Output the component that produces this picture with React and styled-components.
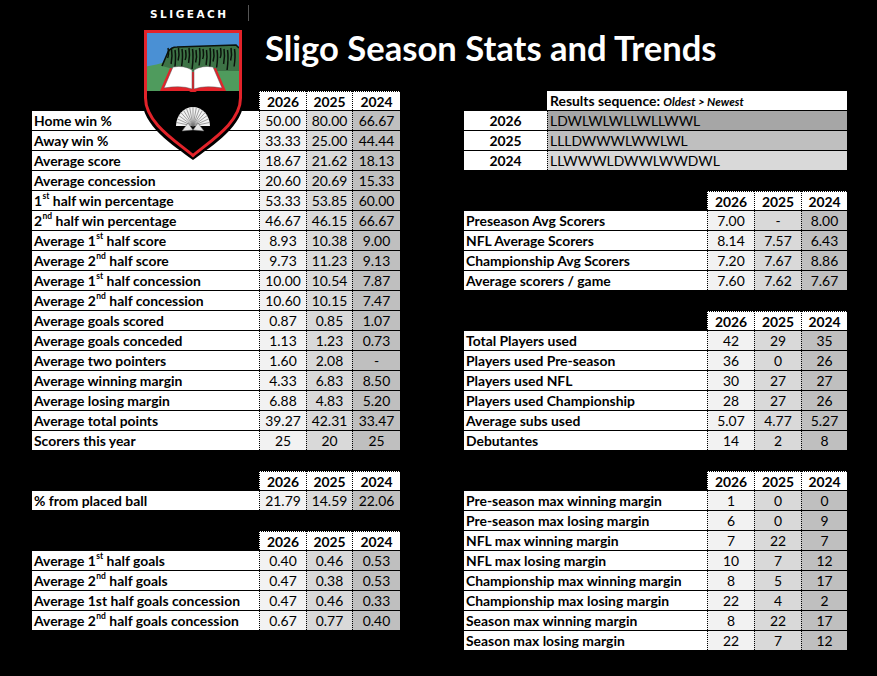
import styled, { createGlobalStyle } from 'styled-components';

const YEARS = ['2026', '2025', '2024'];
const SHADES = ['#f2f2f2', '#d9d9d9', '#bfbfbf'];

const mainStats = [
  ['Home win %', '50.00', '80.00', '66.67'],
  ['Away win %', '33.33', '25.00', '44.44'],
  ['Average score', '18.67', '21.62', '18.13'],
  ['Average concession', '20.60', '20.69', '15.33'],
  [<>1<sup>st</sup> half win percentage</>, '53.33', '53.85', '60.00'],
  [<>2<sup>nd</sup> half win percentage</>, '46.67', '46.15', '66.67'],
  [<>Average 1<sup>st</sup> half score</>, '8.93', '10.38', '9.00'],
  [<>Average 2<sup>nd</sup> half score</>, '9.73', '11.23', '9.13'],
  [<>Average 1<sup>st</sup> half concession</>, '10.00', '10.54', '7.87'],
  [<>Average 2<sup>nd</sup> half concession</>, '10.60', '10.15', '7.47'],
  ['Average goals scored', '0.87', '0.85', '1.07'],
  ['Average goals conceded', '1.13', '1.23', '0.73'],
  ['Average two pointers', '1.60', '2.08', '-'],
  ['Average winning margin', '4.33', '6.83', '8.50'],
  ['Average losing margin', '6.88', '4.83', '5.20'],
  ['Average total points', '39.27', '42.31', '33.47'],
  ['Scorers this year', '25', '20', '25'],
];

const placedBall = [['% from placed ball', '21.79', '14.59', '22.06']];

const halfGoals = [
  [<>Average 1<sup>st</sup> half goals</>, '0.40', '0.46', '0.53'],
  [<>Average 2<sup>nd</sup> half goals</>, '0.47', '0.38', '0.53'],
  ['Average 1st half goals concession', '0.47', '0.46', '0.33'],
  [<>Average 2<sup>nd</sup> half goals concession</>, '0.67', '0.77', '0.40'],
];

const sequences = [
  ['2026', 'LDWLWLWLLWLLWWL', '#a6a6a6'],
  ['2025', 'LLLDWWWLWWLWL', '#bfbfbf'],
  ['2024', 'LLWWWLDWWLWWDWL', '#d9d9d9'],
];

const scorers = [
  ['Preseason Avg Scorers', '7.00', '-', '8.00'],
  ['NFL Average Scorers', '8.14', '7.57', '6.43'],
  ['Championship Avg Scorers', '7.20', '7.67', '8.86'],
  ['Average scorers / game', '7.60', '7.62', '7.67'],
];

const players = [
  ['Total Players used', '42', '29', '35'],
  ['Players used Pre-season', '36', '0', '26'],
  ['Players used NFL', '30', '27', '27'],
  ['Players used Championship', '28', '27', '26'],
  ['Average subs used', '5.07', '4.77', '5.27'],
  ['Debutantes', '14', '2', '8'],
];

const margins = [
  ['Pre-season max winning margin', '1', '0', '0'],
  ['Pre-season max losing margin', '6', '0', '9'],
  ['NFL max winning margin', '7', '22', '7'],
  ['NFL max losing margin', '10', '7', '12'],
  ['Championship max winning margin', '8', '5', '17'],
  ['Championship max losing margin', '22', '4', '2'],
  ['Season max winning margin', '8', '22', '17'],
  ['Season max losing margin', '22', '7', '12'],
];

function StatTable({ rows, cols }) {
  return (
    <Grid $cols={cols}>
      <Blank />
      {YEARS.map((y) => (
        <HeadCell key={y}>{y}</HeadCell>
      ))}
      {rows.map((row, i) => [
        <LabelCell key={'l' + i}>
          <span>{row[0]}</span>
        </LabelCell>,
        ...row.slice(1).map((v, j) => (
          <ValueCell key={i + '-' + j} $shade={SHADES[j]}>
            {v}
          </ValueCell>
        )),
      ])}
    </Grid>
  );
}

function Crest() {
  // shell ribs fanning out from the hinge
  const ribs = [];
  for (let k = 0; k <= 14; k++) {
    const a = Math.PI * (0.06 + (0.88 * k) / 14);
    ribs.push(
      <line
        key={k}
        x1={52}
        y1={99}
        x2={52 - Math.cos(a) * 17}
        y2={99 - Math.sin(a) * 19}
        stroke="#777"
        strokeWidth="0.7"
      />
    );
  }
  // dark gullies on the cliff face
  const streaks = [];
  for (let k = 0; k < 20; k++) {
    const x = 27 + k * 3.5;
    streaks.push(
      <path
        key={k}
        d={`M${x} ${21 + (k % 3)} q1.2 7 -0.4 ${10 + ((k * 7) % 5) * 2.5}`}
        stroke="#0b120b"
        strokeWidth="1.5"
        fill="none"
      />
    );
  }
  return (
    <CrestBox>
      <svg width="104" height="134" viewBox="0 0 104 134">
        <defs>
          <clipPath id="shieldIn">
            <path d="M5 5 H99 V71 C99 95 70 113 52 128 C34 113 5 95 5 71 Z" />
          </clipPath>
        </defs>
        <path d="M1 1 H103 V72 C103 99 72 118 52 133 C32 118 1 99 1 72 Z" fill="#000" />
        <g clipPath="url(#shieldIn)">
          <rect x="0" y="0" width="104" height="134" fill="#000" />
          <rect x="0" y="0" width="104" height="44" fill="#4a90d4" />
          <path d="M0 40 C10 39 18 37 24 35 L104 30 V64 H0 Z" fill="#4f9b5d" />
          <path d="M21 39 L27 25 Q30 20 36 20 L95 18 L98 21 L98 44 L40 44 Z" fill="#3d7346" />
          <path d="M21 39 L27 25 Q30 20 36 20 L95 18 L98 21" fill="none" stroke="#0b120b" strokeWidth="1.6" />
          {streaks}
          <path d="M19 64 L29 41 L52 45 L75 41 L85 64 L56 64 Q52 67 48 64 Z" fill="#e3232a" />
          <path d="M23 61 L32 40 Q43 38 51 43 L51 62 Q40 58 23 61 Z" fill="#fff" stroke="#555" strokeWidth="0.5" />
          <path d="M81 61 L72 40 Q61 38 53 43 L53 62 Q64 58 81 61 Z" fill="#fff" stroke="#555" strokeWidth="0.5" />
          <rect x="0" y="65" width="104" height="70" fill="#000" />
          <path d="M35 99 A17 19 0 0 1 69 99 Z" fill="#f2f2f2" />
          {ribs}
          <path d="M41 104 L47 96 L52 103 Z" fill="#e6e6e6" stroke="#555" strokeWidth="0.5" />
          <path d="M63 104 L57 96 L52 103 Z" fill="#e6e6e6" stroke="#555" strokeWidth="0.5" />
        </g>
        <path
          d="M4.5 4.5 H99.5 V71 C99.5 95.5 70 113.5 52 128.5 C34 113.5 4.5 95.5 4.5 71 Z"
          fill="none"
          stroke="#e3232a"
          strokeWidth="3"
        />
      </svg>
    </CrestBox>
  );
}

export default function App() {
  return (
    <Page>
      <GlobalStyle />
      <Header>
        <Brand>
          <Wordmark>SLIGEACH</Wordmark>
          <Divider />
        </Brand>
        <Title>Sligo Season Stats and Trends</Title>
      </Header>
      <Crest />
      <Columns>
        <Column $width={368}>
          <StatTable rows={mainStats} cols="227px 47px 46px 48px" />
          <StatTable rows={placedBall} cols="227px 47px 46px 48px" />
          <StatTable rows={halfGoals} cols="227px 47px 46px 48px" />
        </Column>
        <Column $width={383}>
          <Grid $cols="83px 300px">
            <Blank />
            <SeqHead>
              <span>
                Results sequence: <em>Oldest &gt; Newest</em>
              </span>
            </SeqHead>
            {sequences.map(([y, s, c]) => [
              <YearCell key={'y' + y}>{y}</YearCell>,
              <SeqCell key={'s' + y} $shade={c}>
                {s}
              </SeqCell>,
            ])}
          </Grid>
          <StatTable rows={scorers} cols="243px 47px 47px 46px" />
          <StatTable rows={players} cols="243px 47px 47px 46px" />
          <StatTable rows={margins} cols="243px 47px 47px 46px" />
        </Column>
      </Columns>
    </Page>
  );
}

const GlobalStyle = createGlobalStyle`
  html, body {
    margin: 0;
    background: #000;
  }
  body {
    font-family: Lato, "Liberation Sans", sans-serif;
  }
`;

const Page = styled.div`
  position: relative;
  width: 877px;
  height: 676px;
  background: #000;
  overflow: hidden;
`;

const Header = styled.header`
  display: flex;
  height: 91px;
`;

const Brand = styled.div`
  display: flex;
  align-items: flex-start;
  width: 265px;
  padding-left: 150px;
  box-sizing: border-box;
`;

const Wordmark = styled.div`
  margin-top: 8px;
  font-family: "DejaVu Sans", sans-serif;
  font-weight: bold;
  font-size: 10.5px;
  line-height: 12px;
  letter-spacing: 2.5px;
  color: #fff;
`;

const Divider = styled.div`
  width: 1px;
  height: 16px;
  margin: 5px 16px 0 auto;
  background: #555;
`;

const Title = styled.h1`
  margin: 0;
  padding-top: 28px;
  font-family: Lato, sans-serif;
  font-weight: bold;
  font-size: 34.6px;
  line-height: 40px;
  color: #fff;
`;

const CrestBox = styled.div`
  position: absolute;
  left: 141px;
  top: 27px;
  z-index: 2;
  line-height: 0;
`;

const Columns = styled.main`
  display: flex;
  gap: 64px;
  padding-left: 32px;
`;

const Column = styled.section`
  display: flex;
  flex-direction: column;
  gap: 21px;
  width: ${(p) => p.$width}px;
`;

const Grid = styled.div`
  display: grid;
  grid-template-columns: ${(p) => p.$cols};
  grid-auto-rows: 19px;
  row-gap: 1px;
  background: #000;
  font-size: 13.9px;
  color: #000;
`;

const Blank = styled.div``;

const Cell = styled.div`
  display: flex;
  align-items: center;
  line-height: 19px;
  white-space: nowrap;
  overflow: hidden;
  sup {
    font-size: 8.5px;
    line-height: 0;
    position: relative;
    top: -1px;
    margin-left: 0.5px;
  }
`;

const LabelCell = styled(Cell)`
  background: #fff;
  font-weight: bold;
  padding-left: 2px;
`;

const HeadCell = styled(Cell)`
  justify-content: center;
  background: #fff;
  font-weight: bold;
  border-left: 1px dotted #000;
  border-top: 1px dotted #000;
  box-sizing: border-box;
`;

const ValueCell = styled(Cell)`
  justify-content: center;
  background: ${(p) => p.$shade};
  border-left: 1px dotted #000;
  box-sizing: border-box;
`;

const YearCell = styled(Cell)`
  justify-content: center;
  background: #fff;
  font-weight: bold;
`;

const SeqHead = styled(Cell)`
  background: #fff;
  font-weight: bold;
  padding-left: 3px;
  em {
    font-size: 11.5px;
  }
`;

const SeqCell = styled(Cell)`
  background: ${(p) => p.$shade};
  padding-left: 2px;
  border-left: 1px dotted #000;
`;
